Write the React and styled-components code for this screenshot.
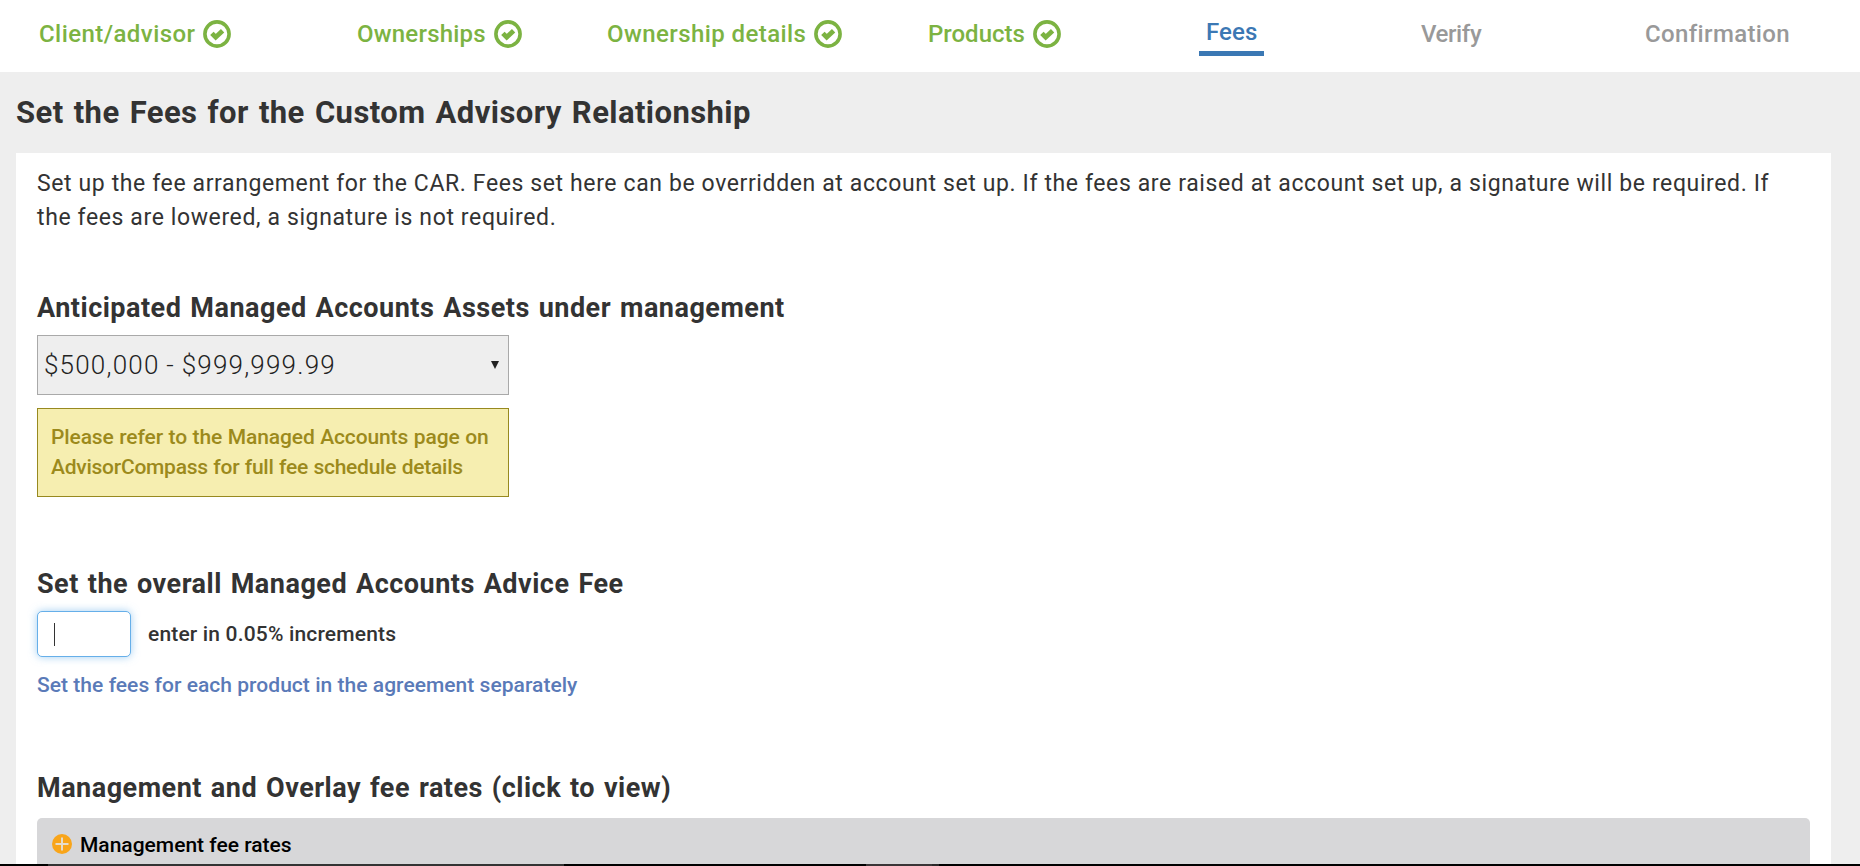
import React from 'react';
import styled, { createGlobalStyle } from 'styled-components';

const GlobalStyle = createGlobalStyle`
  *, *::before, *::after { box-sizing: border-box; }
  body {
    margin: 0;
    background: #eeeeee;
    color: #333333;
    font-family: Roboto, 'Liberation Sans', sans-serif;
    overflow: hidden;
  }
`;

const Page = styled.div`
  height: 866px;
  display: flex;
  flex-direction: column;
`;

const Steps = styled.nav`
  flex: none;
  height: 72px;
  padding: 20px 0 0 39px;
  background: #ffffff;
  display: grid;
  grid-template-columns: 318px 250px 321px 271px 222px 224px auto;
  align-items: start;
  justify-content: start;
`;

const stepColors = { done: '#7cb342', current: '#3b78b4', pending: '#999999' };

const Step = styled.div`
  display: flex;
  align-items: center;
  gap: 8px;
  justify-self: start;
  color: ${(p) => stepColors[p.$state]};
  font-size: 24px;
  font-weight: 500;
  line-height: 28px;
  letter-spacing: ${(p) => p.$tracking ?? 0.36}px;
  white-space: nowrap;
  ${(p) =>
    p.$state === 'current' &&
    `
    margin-top: -2px;
    padding: 0 7px 5px 7px;
    border-bottom: 5px solid #3b78b4;
  `}
`;

const Icon = styled.svg`
  display: block;
  flex: none;
  width: ${(p) => p.$size}px;
  height: ${(p) => p.$size}px;
`;

const Body = styled.div`
  flex: 1;
  min-height: 0;
  display: flex;
  flex-direction: column;
  overflow: hidden;
`;

const Title = styled.h1`
  flex: none;
  margin: 0;
  padding-left: 16px;
  font-size: 31px;
  font-weight: 700;
  line-height: 81px;
  letter-spacing: 0.42px;
  word-spacing: 2px;
`;

const Panel = styled.main`
  flex: 1;
  min-height: 0;
  margin: 0 29px 0 16px;
  padding: 14px 21px 0;
  background: #ffffff;
  overflow: hidden;
`;

const Intro = styled.p`
  margin: 0;
  font-size: 23px;
  line-height: 34px;
  letter-spacing: 0.615px;
`;

const Section = styled.section`
  margin-top: ${(p) => p.$top}px;
`;

const Heading = styled.h2`
  margin: 0 0 ${(p) => p.$gap ?? 9}px;
  font-size: 27px;
  font-weight: 700;
  line-height: 36px;
  letter-spacing: ${(p) => p.$tracking ?? 0.5}px;
  word-spacing: 1.7px;
`;

const Select = styled.div`
  width: 472px;
  height: 60px;
  padding: 0 9px 0 6px;
  display: flex;
  align-items: center;
  justify-content: space-between;
  background: #eeeeee;
  border: 1px solid #a9a9a9;
  color: #222222;
  font-size: 26px;
  font-weight: 300;
  letter-spacing: 1.2px;
  word-spacing: -0.8px;
`;

const Arrow = styled.span`
  border: 4px solid transparent;
  border-top: 8px solid #222222;
  border-bottom: 0;
`;

const Note = styled.div`
  width: 472px;
  height: 89px;
  margin-top: 13px;
  padding: 13px 13px 0;
  background: #f6eeb0;
  border: 1px solid #97891f;
  color: #9c8a1c;
  font-size: 21px;
  font-weight: 500;
  line-height: 30px;
  white-space: nowrap;
`;

const NoteLine = styled.div`
  letter-spacing: ${(p) => p.$tracking}px;
  word-spacing: ${(p) => p.$words ?? 0}px;
`;

const FieldRow = styled.label`
  display: flex;
  align-items: center;
  gap: 17px;
  font-size: 21px;
  font-weight: 500;
  letter-spacing: 0.17px;
`;

const Field = styled.span`
  width: 94px;
  height: 46px;
  padding-left: 16px;
  display: flex;
  align-items: center;
  background: #ffffff;
  border: 1px solid #66afe9;
  border-radius: 5px;
  box-shadow: 0 0 9px rgba(102, 175, 233, 0.6);
`;

const Caret = styled.span`
  width: 1px;
  height: 23px;
  background: #333333;
`;

const Link = styled.a`
  display: block;
  margin-top: 13px;
  color: #5a7ab8;
  font-size: 21px;
  font-weight: 500;
  line-height: 30px;
  letter-spacing: 0.04px;
`;

const Accordion = styled.div`
  height: 68px;
  padding: 12px 15px;
  display: flex;
  align-items: flex-start;
  gap: 8px;
  background: #d7d7d9;
  border-radius: 5px;
  color: #000000;
  font-size: 21px;
  font-weight: 500;
  line-height: 30px;
`;

const PlusWrap = styled.span`
  padding-top: 4px;
`;

const Taskbar = styled.footer`
  flex: none;
  height: 2px;
  background: #000000;
  display: flex;
  padding-left: 48px;
`;

const TaskSegment = styled.span`
  width: ${(p) => p.$width}px;
  margin-right: ${(p) => p.$after ?? 0}px;
  background: ${(p) => p.$color};
`;

const CheckIcon = () => (
  <Icon $size={28} viewBox="0 0 28 28">
    <circle cx="14" cy="14" r="12.1" fill="none" stroke="currentColor" strokeWidth="3.6" />
    <path d="M8.9 13.3 L12.7 17.2 L19.6 10.7" fill="none" stroke="currentColor" strokeWidth="4.8" />
  </Icon>
);

const PlusIcon = () => (
  <Icon $size={20} viewBox="0 0 20 20">
    <circle cx="10" cy="10" r="10" fill="#f9a51a" />
    <path d="M10 3.5v13M3.5 10h13" stroke="#e6dccb" strokeWidth="2" />
  </Icon>
);

const steps = [
  { label: 'Client/advisor', state: 'done', tracking: 0.43 },
  { label: 'Ownerships', state: 'done', tracking: 0.22 },
  { label: 'Ownership details', state: 'done', tracking: 0.42 },
  { label: 'Products', state: 'done', tracking: 0 },
  { label: 'Fees', state: 'current', tracking: 0.1 },
  { label: 'Verify', state: 'pending', tracking: -0.4 },
  { label: 'Confirmation', state: 'pending' },
];

export default function App() {
  return (
    <Page>
      <GlobalStyle />
      <Steps>
        {steps.map((s) => (
          <Step key={s.label} $state={s.state} $tracking={s.tracking}>
            {s.label}
            {s.state === 'done' && <CheckIcon />}
          </Step>
        ))}
      </Steps>
      <Body>
        <Title>Set the Fees for the Custom Advisory Relationship</Title>
        <Panel>
          <Intro>
            Set up the fee arrangement for the CAR. Fees set here can be overridden at account set
            up. If the fees are raised at account set up, a signature will be required. If
            <br />
            the fees are lowered, a signature is not required.
          </Intro>
          <Section $top={55}>
            <Heading>Anticipated Managed Accounts Assets under management</Heading>
            <Select>
              $500,000 - $999,999.99
              <Arrow />
            </Select>
            <Note>
              <NoteLine $tracking={-0.12} $words={0.5}>
                Please refer to the Managed Accounts page on
              </NoteLine>
              <NoteLine $tracking={-0.25} $words={0.5}>
                AdvisorCompass for full fee schedule details
              </NoteLine>
            </Note>
          </Section>
          <Section $top={69}>
            <Heading>Set the overall Managed Accounts Advice Fee</Heading>
            <FieldRow>
              <Field>
                <Caret />
              </Field>
              enter in 0.05% increments
            </FieldRow>
            <Link>Set the fees for each product in the agreement separately</Link>
          </Section>
          <Section $top={70}>
            <Heading $gap={12}>Management and Overlay fee rates (click to view)</Heading>
            <Accordion>
              <PlusWrap>
                <PlusIcon />
              </PlusWrap>
              Management fee rates
            </Accordion>
          </Section>
        </Panel>
      </Body>
      <Taskbar>
        <TaskSegment $width={516} $after={302} $color="#333333" />
        <TaskSegment $width={66} $color="#3a3537" />
        <TaskSegment $width={7} $color="#2a2829" />
      </Taskbar>
    </Page>
  );
}
